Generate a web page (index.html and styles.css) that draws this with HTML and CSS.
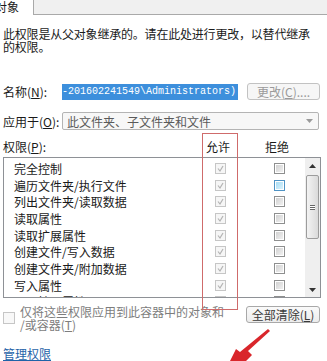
FILE: index.html
```html
<!DOCTYPE html>
<html lang="zh-CN">
  <head>
    <meta charset="UTF-8" />
    <meta name="viewport" content="width=device-width, initial-scale=1.0" />
    <title>权限项目</title>
    <link rel="stylesheet" href="styles.css">
  </head>
  <body>
    <div class="tabs">
      <div class="tab-active">对象</div>
      <div class="tab-strip"></div>
    </div>

    <p class="notice">此权限是从父对象继承的。请在此处进行更改，以替代继承<br>的权限。</p>

    <div class="field field-name">
      <span class="field-label">名称(<u>N</u>):</span>
      <span class="name-box">-201602241549\Administrators)</span>
      <span class="btn btn-disabled">更改(<u>C</u>)....</span>
    </div>

    <div class="field field-apply">
      <span class="field-label">应用于(<u>O</u>):</span>
      <div class="combo">
        <span>此文件夹、子文件夹和文件</span>
        <svg class="combo-arrow" width="7" height="4" viewBox="0 0 7 4"><path d="M0 0H7L3.5 4Z" fill="#9a9a9a"/></svg>
      </div>
    </div>

    <div class="perm-head">
      <span class="perm-title">权限(<u>P</u>):</span>
      <span class="col">允许</span>
      <span></span>
      <span class="col">拒绝</span>
    </div>

    <div class="perm-list">
      <div class="rows">
        <div class="row"><span class="name">完全控制</span><span class="col"><i class="cb cb-allow"></i></span><span></span><span class="col"><i class="cb"></i></span></div>
        <div class="row"><span class="name">遍历文件夹/执行文件</span><span class="col"><i class="cb cb-allow"></i></span><span></span><span class="col"><i class="cb cb-hover"></i></span></div>
        <div class="row"><span class="name">列出文件夹/读取数据</span><span class="col"><i class="cb cb-allow"></i></span><span></span><span class="col"><i class="cb"></i></span></div>
        <div class="row"><span class="name">读取属性</span><span class="col"><i class="cb cb-allow"></i></span><span></span><span class="col"><i class="cb"></i></span></div>
        <div class="row"><span class="name">读取扩展属性</span><span class="col"><i class="cb cb-allow"></i></span><span></span><span class="col"><i class="cb"></i></span></div>
        <div class="row"><span class="name">创建文件/写入数据</span><span class="col"><i class="cb cb-allow"></i></span><span></span><span class="col"><i class="cb"></i></span></div>
        <div class="row"><span class="name">创建文件夹/附加数据</span><span class="col"><i class="cb cb-allow"></i></span><span></span><span class="col"><i class="cb"></i></span></div>
        <div class="row"><span class="name">写入属性</span><span class="col"><i class="cb cb-allow"></i></span><span></span><span class="col"><i class="cb"></i></span></div>
        <div class="row"><span class="name">写入扩展属性</span><span class="col"><i class="cb cb-allow"></i></span><span></span><span class="col"><i class="cb"></i></span></div>
      </div>
      <div class="scrollbar">
        <div class="sb-btn"><svg width="7" height="4" viewBox="0 0 7 4"><path d="M0 4H7L3.5 0Z" fill="#333"/></svg></div>
        <div class="sb-track">
          <div class="sb-thumb"><span class="grip"></span></div>
        </div>
        <div class="sb-btn"><svg width="7" height="4" viewBox="0 0 7 4"><path d="M0 0H7L3.5 4Z" fill="#333"/></svg></div>
      </div>
    </div>

    <div class="bottom">
      <label class="option">
        <i class="cb cb-off"></i>
        <span>仅将这些权限应用到此容器中的对象和<br>/或容器(<u>T</u>)</span>
      </label>
      <span class="btn">全部清除(<u>L</u>)</span>
    </div>

    <a href="#" class="manage">管理权限</a>

    <div class="mark"></div>
    <svg class="arrow" width="60" height="40" viewBox="0 0 60 40">
      <path d="M44 8 L46 10 L24 30 L28 34 L22 40 L6 40 L12 28 L16 31 Z" fill="#d9262b"/>
    </svg>
  </body>
</html>
```

FILE: styles.css
```css
body {
  margin: 0;
  width: 327px;
  height: 361px;
  overflow: hidden;
  position: relative;
  background-color: #fff;
  color: #1a1a1a;
  font-family: "Noto Sans CJK SC", "DejaVu Sans", sans-serif;
  font-size: 12px;
  line-height: 13px;
}

u {
  text-decoration: underline;
}

/* tab strip at the top */
.tabs {
  display: flex;
  height: 15px;
}

.tab-active {
  width: 38px;
  margin-left: -5px;
  line-height: 14px;
  white-space: nowrap;
  overflow: hidden;
}

.tab-strip {
  flex: 1;
  background-color: #f0f0f0;
  border-left: 1px solid #a9a9a9;
  border-bottom: 1px solid #a9a9a9;
}

.notice {
  margin: 12px 0 0;
  padding: 0 3px;
  white-space: nowrap;
  letter-spacing: -0.2px;
}

/* name / apply-to rows */
.field {
  display: flex;
  align-items: center;
  padding-left: 3px;
}

.field-label {
  width: 59px;
  white-space: nowrap;
}

.field-name {
  margin-top: 30px;
  height: 17px;
}

.name-box {
  width: 176px;
  height: 16px;
  line-height: 16px;
  background-color: #3d8fdc;
  color: #fff;
  font-family: "Liberation Mono", monospace;
  font-size: 10px;
  white-space: nowrap;
  overflow: hidden;
}

.btn {
  display: flex;
  align-items: center;
  justify-content: center;
  margin-left: 9px;
  width: 73px;
  height: 17px;
  box-sizing: border-box;
  border: 1px solid #a8a8a8;
  border-radius: 3px;
  background: linear-gradient(#fafafa, #ececec);
  color: #3a3a3a;
  white-space: nowrap;
}

.btn-disabled {
  color: #9a9a9a;
  border-color: #c2c2c2;
  background: #f6f6f6;
}

.field-apply {
  margin-top: 12px;
  height: 18px;
}

.combo {
  width: 257px;
  height: 18px;
  box-sizing: border-box;
  border: 1px solid #b4b4b4;
  border-radius: 2px;
  background-color: #f7f7f7;
  color: #5a5a5a;
  display: flex;
  align-items: center;
  justify-content: space-between;
  padding: 0 5px 0 4px;
}

/* permission grid */
.perm-head,
.row {
  display: grid;
  grid-template-columns: 198px 36px 23px 36px;
  align-items: center;
}

.perm-head {
  margin-top: 9px;
  padding-left: 3px;
  height: 14px;
}

.col {
  display: flex;
  justify-content: center;
}

.perm-head .col {
  margin-left: -2px;
}

.perm-list {
  margin: 4px 0 0 3px;
  width: 318px;
  height: 141px;
  box-sizing: border-box;
  border: 1px solid #8e9196;
  display: flex;
  overflow: hidden;
}

.rows {
  flex: 1;
  padding-top: 2px;
  overflow: hidden;
}

.row {
  height: 16.7px;
}

.row .name {
  padding-left: 10px;
  white-space: nowrap;
}

.cb {
  display: block;
  width: 11px;
  height: 11px;
  box-sizing: border-box;
  border: 1px solid #8e8f8f;
  box-shadow: inset 0 0 0 1px #fff;
  background: linear-gradient(135deg, #cdcdcd, #f5f5f5);
}

.cb-allow {
  border-color: #c6c6c6;
  box-shadow: none;
  background: #f6f6f6 url("data:image/svg+xml,%3Csvg xmlns='http://www.w3.org/2000/svg' width='9' height='9'%3E%3Cpath d='M2 4.5L4 7L7 2' fill='none' stroke='%23b3b3b3' stroke-width='1.2'/%3E%3C/svg%3E") center no-repeat;
}

.cb-hover {
  border-color: #4f93c4;
  background: linear-gradient(135deg, #9fd9f3, #e2f5fd);
}

.cb-off {
  width: 12px;
  height: 12px;
  border-color: #c6c6c6;
  box-shadow: none;
  background: #f8f8f8;
  flex-shrink: 0;
}

/* scrollbar */
.scrollbar {
  width: 15px;
  background-color: #efefef;
  display: flex;
  flex-direction: column;
}

.sb-btn {
  height: 15px;
  display: flex;
  align-items: center;
  justify-content: center;
}

.sb-track {
  flex: 1;
  padding: 2px 1px;
}

.sb-thumb {
  height: 64px;
  box-sizing: border-box;
  border: 1px solid #9c9c9c;
  border-radius: 2px;
  background: linear-gradient(90deg, #f3f3f3, #dadada);
  display: flex;
  align-items: center;
  justify-content: center;
}

.grip {
  width: 5px;
  height: 5px;
  border-top: 1px solid #666;
  border-bottom: 1px solid #666;
  background: linear-gradient(#fff 40%, #666 40%, #666 60%, #fff 60%);
  box-sizing: border-box;
}

/* bottom row */
.bottom {
  display: flex;
  align-items: flex-start;
  justify-content: space-between;
  margin-top: 7px;
  padding: 0 7px 0 3px;
}

.option {
  display: flex;
  align-items: center;
  gap: 5px;
  color: #7d7d7d;
  white-space: nowrap;
}

.bottom .btn {
  margin-top: 1px;
  width: 74px;
}

.manage {
  display: inline-block;
  margin: 16px 0 0 3px;
  color: #1f63a8;
  line-height: 14px;
}

/* red annotation marks over the screenshot */
.mark {
  position: absolute;
  left: 202px;
  top: 133px;
  width: 34px;
  height: 175px;
  border: 1px solid #cf6b6b;
}

.arrow {
  position: absolute;
  left: 224px;
  top: 321px;
}
```
